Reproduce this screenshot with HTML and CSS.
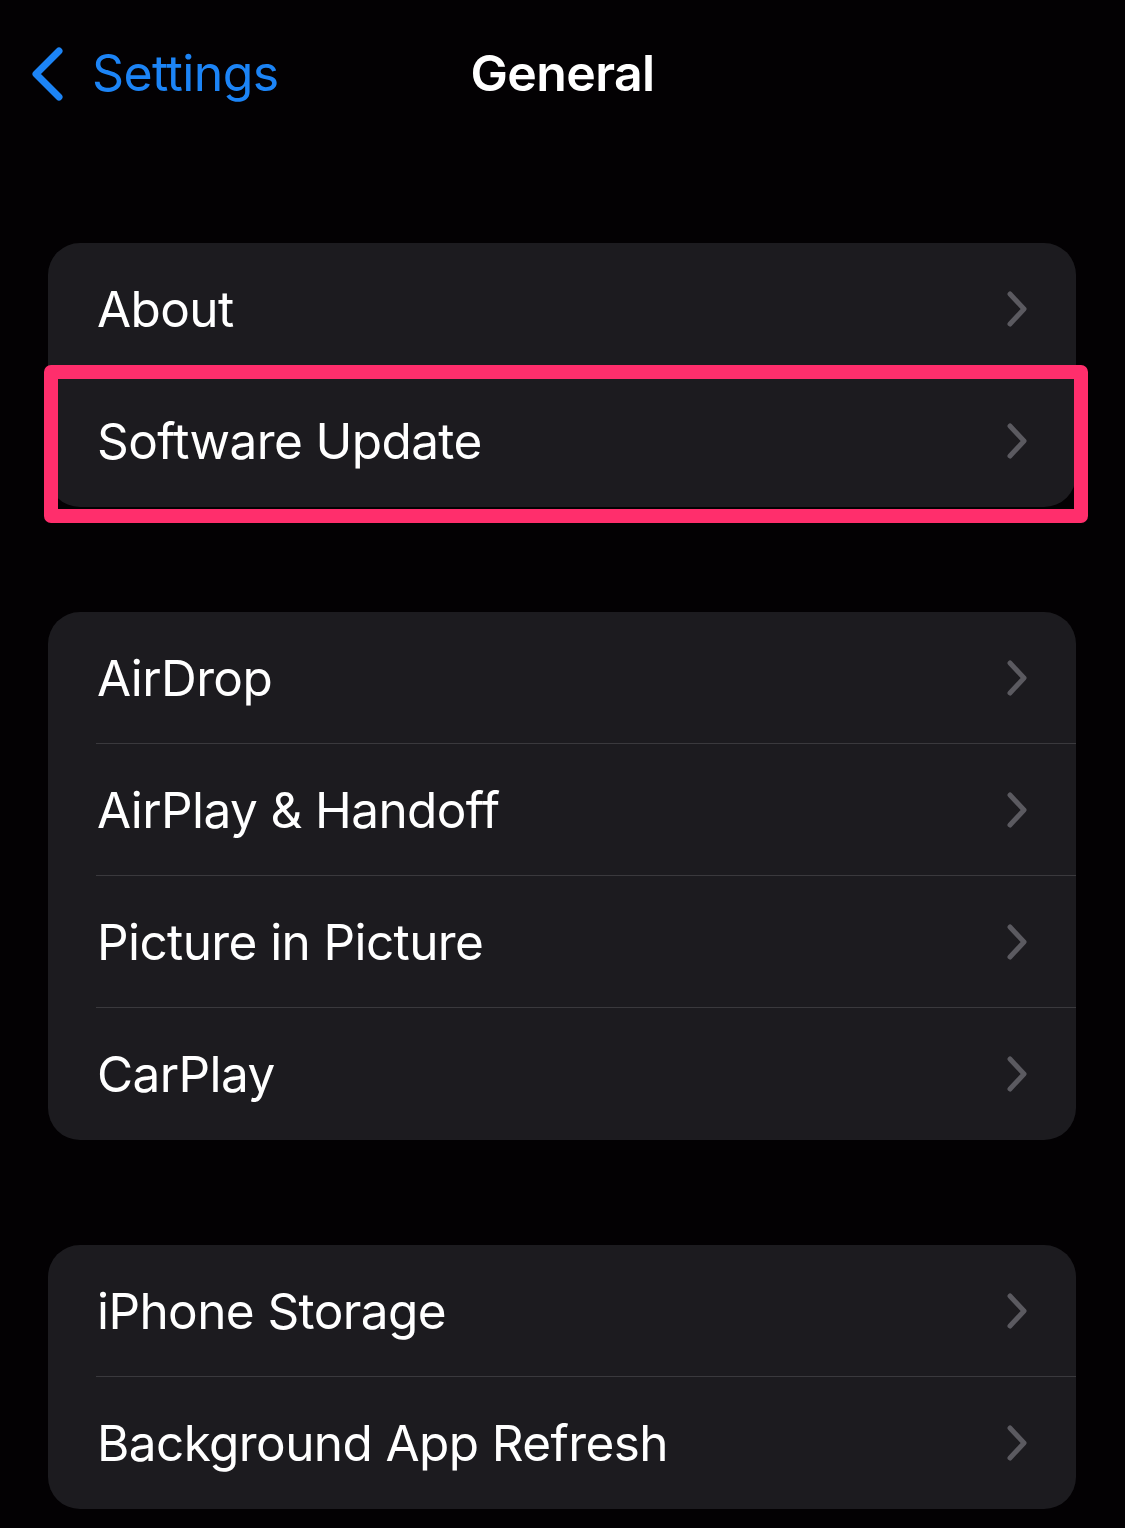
FILE: index.html
```html
<!DOCTYPE html>
<html lang="en">
<head>
    <meta charset="UTF-8">
    <meta name="viewport" content="width=device-width, initial-scale=1.0">
    <title>General</title>
    <link rel="stylesheet" href="styles.css">
</head>

<body>
    <!-- Barra de navegación -->
    <header class="navbar">
        <a class="back" href="#">
            <svg class="back-icon" width="34" height="56" viewBox="0 0 34 56">
                <path d="M29 5 L6 28 L29 51" fill="none" stroke="currentColor" stroke-width="7" stroke-linecap="round" stroke-linejoin="round"/>
            </svg>
            <span>Settings</span>
        </a>
        <h1 class="title">General</h1>
        <div></div>
    </header>

    <main class="groups">
        <ul class="group">
            <li class="row"><span>About</span>
                <svg class="chevron" width="22" height="38" viewBox="0 0 22 38"><path d="M4 4 L18 19 L4 34"/></svg>
            </li>
            <li class="row marked"><span>Software Update</span>
                <svg class="chevron" width="22" height="38" viewBox="0 0 22 38"><path d="M4 4 L18 19 L4 34"/></svg>
            </li>
        </ul>

        <ul class="group">
            <li class="row"><span>AirDrop</span>
                <svg class="chevron" width="22" height="38" viewBox="0 0 22 38"><path d="M4 4 L18 19 L4 34"/></svg>
            </li>
            <li class="row"><span>AirPlay &amp; Handoff</span>
                <svg class="chevron" width="22" height="38" viewBox="0 0 22 38"><path d="M4 4 L18 19 L4 34"/></svg>
            </li>
            <li class="row"><span>Picture in Picture</span>
                <svg class="chevron" width="22" height="38" viewBox="0 0 22 38"><path d="M4 4 L18 19 L4 34"/></svg>
            </li>
            <li class="row"><span>CarPlay</span>
                <svg class="chevron" width="22" height="38" viewBox="0 0 22 38"><path d="M4 4 L18 19 L4 34"/></svg>
            </li>
        </ul>

        <ul class="group">
            <li class="row"><span>iPhone Storage</span>
                <svg class="chevron" width="22" height="38" viewBox="0 0 22 38"><path d="M4 4 L18 19 L4 34"/></svg>
            </li>
            <li class="row"><span>Background App Refresh</span>
                <svg class="chevron" width="22" height="38" viewBox="0 0 22 38"><path d="M4 4 L18 19 L4 34"/></svg>
            </li>
        </ul>
    </main>
</body>
</html>
```

FILE: styles.css
```css
body {
    font-family: 'Inter', 'Noto Sans', sans-serif;
    margin: 0;
    background-color: #030103; /* Fondo negro del modo oscuro */
    color: #fff;
    height: 1528px;
    overflow: hidden;
}

.navbar {
    display: grid;
    grid-template-columns: 1fr auto 1fr;
    align-items: center;
    height: 146px;
    padding: 0 30px;
}

.back {
    display: flex;
    align-items: center;
    gap: 28px;
    color: #1c84f6; /* Azul del sistema */
    text-decoration: none;
    font-size: 50px;
    letter-spacing: -0.6px;
}

.back-icon {
    margin-top: 2px;
}

.title {
    margin: 0;
    font-size: 50px;
    font-weight: 600;
    letter-spacing: -0.6px;
}

.groups {
    display: flex;
    flex-direction: column;
    gap: 105px;
    padding: 97px 49px 0 48px;
}

.group {
    list-style: none;
    margin: 0;
    padding: 0;
    background-color: #1c1b1f; /* Fondo de las tarjetas */
    border-radius: 32px;
}

.row {
    display: flex;
    align-items: center;
    justify-content: space-between;
    height: 132px;
    padding: 0 48px 0 49px;
    font-size: 49.5px;
    letter-spacing: -0.6px;
    position: relative;
}

/* Separador que empieza en el texto */
.row + .row::before {
    content: "";
    position: absolute;
    top: -1px;
    left: 48px;
    right: 0;
    height: 1px;
    background-color: #3a393d;
}

.chevron path {
    fill: none;
    stroke: #5b5a60;
    stroke-width: 5;
    stroke-linecap: round;
    stroke-linejoin: round;
}

/* Recuadro rosa de resaltado */
.marked::after {
    content: "";
    position: absolute;
    top: -10px;
    left: -4px;
    right: -12px;
    bottom: -16px;
    border: 14px solid #ff2e6c;
    border-radius: 7px;
}

.marked + .row::before,
.marked::before {
    display: none;
}
```
